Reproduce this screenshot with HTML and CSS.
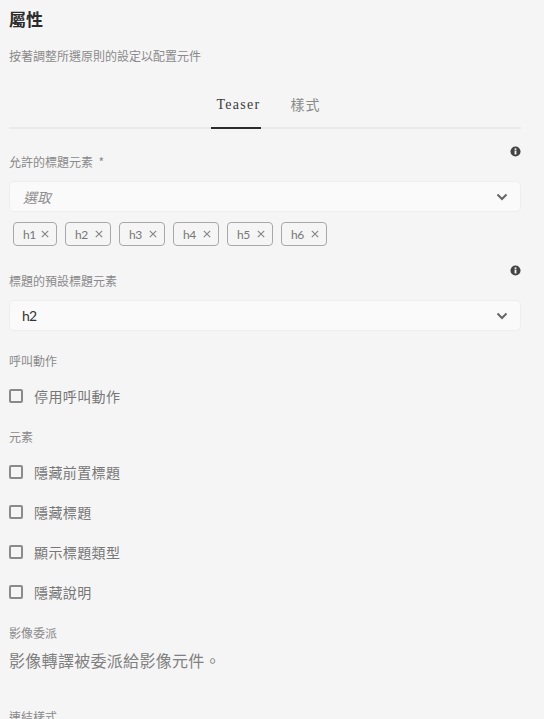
FILE: index.html
```html
<!DOCTYPE html>
<html lang="zh-Hant">
<head>
    <meta charset="UTF-8">
    <title>屬性</title>
    <link rel="stylesheet" href="styles.css">
</head>
<body>
    <h1>屬性</h1>
    <p class="intro">按著調整所選原則的設定以配置元件</p>

    <div class="tabs">
        <div class="tab tab-active">Teaser</div>
        <div class="tab">樣式</div>
    </div>

    <div class="field field-first">
        <svg class="info" viewBox="0 0 12 12"><circle cx="6" cy="6" r="5.5" fill="#444"/><rect x="5" y="5" width="2" height="4.2" fill="#f5f5f5"/><rect x="5" y="2.6" width="2" height="1.7" fill="#f5f5f5"/></svg>
        <label class="label">允許的標題元素 &nbsp;*</label>
        <div class="select">
            <span class="placeholder">選取</span>
            <svg class="chevron" viewBox="0 0 12 8"><path d="M1.5 1.5 6 6l4.5-4.5" fill="none" stroke="#666" stroke-width="2"/></svg>
        </div>
        <div class="tags">
            <div class="tag">h1<svg class="tag-x" viewBox="0 0 8 8"><path d="M.8.8l6.4 6.4M7.2.8.8 7.2" fill="none" stroke="#888" stroke-width="1.2"/></svg></div>
            <div class="tag">h2<svg class="tag-x" viewBox="0 0 8 8"><path d="M.8.8l6.4 6.4M7.2.8.8 7.2" fill="none" stroke="#888" stroke-width="1.2"/></svg></div>
            <div class="tag">h3<svg class="tag-x" viewBox="0 0 8 8"><path d="M.8.8l6.4 6.4M7.2.8.8 7.2" fill="none" stroke="#888" stroke-width="1.2"/></svg></div>
            <div class="tag">h4<svg class="tag-x" viewBox="0 0 8 8"><path d="M.8.8l6.4 6.4M7.2.8.8 7.2" fill="none" stroke="#888" stroke-width="1.2"/></svg></div>
            <div class="tag">h5<svg class="tag-x" viewBox="0 0 8 8"><path d="M.8.8l6.4 6.4M7.2.8.8 7.2" fill="none" stroke="#888" stroke-width="1.2"/></svg></div>
            <div class="tag">h6<svg class="tag-x" viewBox="0 0 8 8"><path d="M.8.8l6.4 6.4M7.2.8.8 7.2" fill="none" stroke="#888" stroke-width="1.2"/></svg></div>
        </div>
    </div>

    <div class="field field-second">
        <svg class="info" viewBox="0 0 12 12"><circle cx="6" cy="6" r="5.5" fill="#444"/><rect x="5" y="5" width="2" height="4.2" fill="#f5f5f5"/><rect x="5" y="2.6" width="2" height="1.7" fill="#f5f5f5"/></svg>
        <label class="label">標題的預設標題元素</label>
        <div class="select">
            <span class="value">h2</span>
            <svg class="chevron" viewBox="0 0 12 8"><path d="M1.5 1.5 6 6l4.5-4.5" fill="none" stroke="#666" stroke-width="2"/></svg>
        </div>
    </div>

    <div class="group-title group-cta">呼叫動作</div>
    <div class="check"><span class="box"></span>停用呼叫動作</div>

    <div class="group-title group-elements">元素</div>
    <div class="check"><span class="box"></span>隱藏前置標題</div>
    <div class="check"><span class="box"></span>隱藏標題</div>
    <div class="check"><span class="box"></span>顯示標題類型</div>
    <div class="check"><span class="box"></span>隱藏說明</div>

    <div class="group-title group-image">影像委派</div>
    <p class="note">影像轉譯被委派給影像元件。</p>

    <div class="group-title group-last">連結樣式</div>
</body>
</html>
```

FILE: styles.css
```css
html, body {
    height: 719px;
    overflow: hidden;
}
body {
    font-family: "Noto Sans CJK TC", "Open Sans", sans-serif;
    color: #6e6e6e;
    margin: 0;
    padding: 0 23px 0 9px;
    background-color: #f5f5f5;
}
h1 {
    font-size: 17px;
    line-height: 24px;
    font-weight: 700;
    color: #2c2c2c;
    margin: 7px 0 0;
}
.intro {
    font-size: 12px;
    line-height: 18px;
    color: #8a8a8a;
    margin: 16px 0 0;
}
.tabs {
    display: flex;
    justify-content: center;
    gap: 30px;
    height: 50px;
    margin-top: 14px;
    padding-left: 2px;
    border-bottom: 2px solid #eaeaea;
    box-sizing: border-box;
}
.tab {
    font-size: 14px;
    line-height: 20px;
    letter-spacing: 1px;
    color: #8a8a8a;
    padding-top: 15px;
    height: 33px;
}
.tab-active {
    font-family: "Liberation Serif", serif;
    letter-spacing: 1.3px;
    color: #3a3a3a;
    padding: 16px 0 0 5px;
    height: 32px;
    border-bottom: 2px solid #2c2c2c;
}
.field {
    position: relative;
}
.field-first {
    margin-top: 24px;
}
.field-second {
    margin-top: 26px;
}
.info {
    position: absolute;
    right: 0;
    top: -7px;
    width: 11px;
    height: 11px;
}
.label {
    display: block;
    font-size: 12px;
    line-height: 18px;
    color: #8a8a8a;
}
.select {
    display: flex;
    align-items: center;
    justify-content: space-between;
    height: 31px;
    margin-top: 10px;
    padding: 0 12px 0 12px;
    background-color: #fafafa;
    border: 1px solid #eeeeee;
    border-radius: 5px;
    box-sizing: border-box;
}
.placeholder {
    font-size: 14px;
    font-style: italic;
    color: #8f8f8f;
    margin-left: 1px;
}
.value {
    font-family: Lato, sans-serif;
    font-size: 14px;
    letter-spacing: -0.8px;
    color: #333;
}
.chevron {
    width: 12px;
    height: 8px;
}
.tags {
    display: flex;
    gap: 8px;
    margin-top: 10px;
    padding-left: 4px;
}
.tag {
    display: flex;
    align-items: center;
    justify-content: space-between;
    width: 46px;
    height: 24px;
    padding: 0 7px 0 9px;
    font-family: Lato, sans-serif;
    font-size: 12px;
    letter-spacing: -0.5px;
    color: #777;
    border: 1px solid #a8a8a8;
    border-radius: 4px;
    box-sizing: border-box;
}
.tag:first-child {
    width: 44px;
}
.tag-x {
    width: 8px;
    height: 8px;
}
.group-title {
    font-size: 12px;
    line-height: 18px;
    color: #8a8a8a;
}
.group-cta {
    margin: 21px 0 6px;
}
.group-elements {
    margin: 12px 0 6px;
}
.group-image {
    margin-top: 12px;
}
.group-last {
    margin-top: 36px;
}
.check {
    display: flex;
    align-items: center;
    gap: 11px;
    height: 40px;
    font-size: 14px;
    letter-spacing: 0.4px;
    color: #777;
}
.box {
    width: 14px;
    height: 14px;
    border: 2px solid #8a8a8a;
    border-radius: 2px;
    box-sizing: border-box;
}
.note {
    font-size: 16px;
    line-height: 24px;
    letter-spacing: 0.3px;
    color: #808080;
    margin: 6px 0 0;
}
```
